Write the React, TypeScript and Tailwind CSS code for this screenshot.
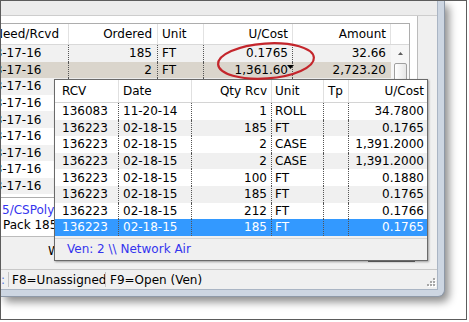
import React from 'react';

type MainRow = { d: string; ord?: string; unit?: string; cost?: string; amt?: string; sel?: boolean };

const mainRows: MainRow[] = [
  { d: '03-17-16', ord: '185', unit: 'FT', cost: '0.1765', amt: '32.66' },
  { d: '03-17-16', ord: '2', unit: 'FT', cost: '1,361.60', amt: '2,723.20', sel: true },
  { d: '03-17-16' },
  { d: '03-17-16' },
  { d: '03-17-16' },
  { d: '03-17-16' },
  { d: '03-17-16' },
  { d: '03-17-16' },
  { d: '03-17-16' },
];

type RcvRow = { rcv: string; date: string; qty: string; unit: string; tp: string; cost: string };

const rcvRows: RcvRow[] = [
  { rcv: '136083', date: '11-20-14', qty: '1', unit: 'ROLL', tp: '', cost: '34.7800' },
  { rcv: '136223', date: '02-18-15', qty: '185', unit: 'FT', tp: '', cost: '0.1765' },
  { rcv: '136223', date: '02-18-15', qty: '2', unit: 'CASE', tp: '', cost: '1,391.2000' },
  { rcv: '136223', date: '02-18-15', qty: '2', unit: 'CASE', tp: '', cost: '1,391.2000' },
  { rcv: '136223', date: '02-18-15', qty: '100', unit: 'FT', tp: '', cost: '0.1880' },
  { rcv: '136223', date: '02-18-15', qty: '185', unit: 'FT', tp: '', cost: '0.1765' },
  { rcv: '136223', date: '02-18-15', qty: '212', unit: 'FT', tp: '', cost: '0.1766' },
  { rcv: '136223', date: '02-18-15', qty: '185', unit: 'FT', tp: '', cost: '0.1765' },
];

function MainGrid() {
  return (
    <div className="w-[409px] h-[175px] border-t border-b border-r border-[#adadad] bg-white flex flex-col">
      {/* header */}
      <div className="h-[21px] flex border-b border-[#d9d9d9] bg-white">
        <div className="w-[68px] overflow-hidden border-r border-[#e2e2e2] flex items-center">
          <span className="ml-[-7px] whitespace-nowrap">Need/Rcvd</span>
        </div>
        <div className="w-[89px] border-r border-[#e2e2e2] flex items-center justify-end pr-[5px]">Ordered</div>
        <div className="w-[46px] border-r border-[#e2e2e2] flex items-center pl-[4px]">Unit</div>
        <div className="w-[89px] border-r border-[#e2e2e2] flex items-center justify-end pr-[4px]">U/Cost</div>
        <div className="w-[98px] border-r border-[#e2e2e2] flex items-center justify-end pr-[4px]">Amount</div>
        <div className="w-[18px]" />
      </div>
      <div className="flex flex-1 min-h-0">
        <div className="w-[390px] flex flex-col">
          {mainRows.map((r, i) => {
            const bg = r.sel ? 'bg-[#dad5cc]' : i % 2 === 0 ? 'bg-[#f1f1f1]' : 'bg-white';
            return (
              <div key={i} className={`h-[16.6px] flex ${bg}`}>
                <div className="w-[68px] overflow-hidden border-r border-dotted border-[#555] flex items-center">
                  <span className="ml-[-14px] whitespace-nowrap">{r.d}</span>
                </div>
                <div className="w-[89px] border-r border-dotted border-[#555] flex items-center justify-end pr-[5px]">{r.ord}</div>
                <div className="w-[46px] border-r border-dotted border-[#555] flex items-center pl-[4px]">{r.unit}</div>
                <div className="relative w-[89px] border-r border-dotted border-[#555] flex items-center justify-end pr-[4px]">
                  {r.cost}
                  {r.sel && (
                    <svg className="absolute right-[-2px] top-[3px]" width="7" height="4" viewBox="0 0 7 4">
                      <path d="M0 0 L7 0 L3.5 4 Z" fill="#000" />
                    </svg>
                  )}
                </div>
                <div className="w-[98px] flex items-center justify-end pr-[5px]">{r.amt}</div>
              </div>
            );
          })}
        </div>
        {/* vertical scrollbar */}
        <div className="w-[18px] bg-[#f6f6f6] flex flex-col items-center">
          <div className="h-[17px] w-full flex items-center justify-center">
            <svg width="5" height="3" viewBox="0 0 5 3">
              <path d="M0 3 L2.5 0 L5 3 Z" fill="#5c5c5c" />
            </svg>
          </div>
          <div className="mt-[1px] w-[13px] h-[70px] rounded-[2px] border border-[#9f9f9f] bg-gradient-to-r from-white to-[#e6e6e6]" />
        </div>
      </div>
    </div>
  );
}

function ReceiptPopup() {
  return (
    <div className="absolute left-[53px] top-[78px] w-[374px] h-[182px] border border-[#6a6a6a] bg-[#f0f0f0] shadow-[1px_1px_2px_rgba(0,0,0,0.35)] flex flex-col">
      <div className="h-[23px] flex bg-white border-b border-[#d4d4d4]">
        <div className="w-[64px] border-r border-[#e0e0e0] flex items-center pl-[7px]">RCV</div>
        <div className="w-[73px] border-r border-[#e0e0e0] flex items-center pl-[4px]">Date</div>
        <div className="w-[80px] border-r border-[#e0e0e0] flex items-center justify-end pr-[4px]">Qty Rcv</div>
        <div className="w-[52px] border-r border-[#e0e0e0] flex items-center pl-[3px]">Unit</div>
        <div className="w-[25px] border-r border-[#e0e0e0] flex items-center pl-[4px]">Tp</div>
        <div className="w-[78px] flex items-center justify-end pr-[3px]">U/Cost</div>
      </div>
      {rcvRows.map((r, i) => {
        const sel = i === rcvRows.length - 1;
        const bg = sel ? 'bg-[#3399ff] text-white' : i % 2 === 1 ? 'bg-[#f0f0f0]' : 'bg-white';
        return (
          <div key={i} className={`h-[16.6px] flex ${bg}`}>
            <div className="w-[64px] border-r border-dotted border-[#555] flex items-center pl-[7px]">{r.rcv}</div>
            <div className="w-[73px] border-r border-dotted border-[#555] flex items-center pl-[4px]">{r.date}</div>
            <div className="w-[80px] border-r border-dotted border-[#555] flex items-center justify-end pr-[4px]">{r.qty}</div>
            <div className="w-[52px] border-r border-dotted border-[#555] flex items-center pl-[3px]">{r.unit}</div>
            <div className="w-[25px] border-r border-dotted border-[#555] flex items-center pl-[4px]">{r.tp}</div>
            <div className="w-[78px] flex items-center justify-end pr-[3px]">{r.cost}</div>
          </div>
        );
      })}
      <div className="mt-[2px] border-t border-[#d6d6d6] flex-1 flex items-center pl-[12px] text-[#3434ee]">
        Ven: 2 \\ Network Air
      </div>
    </div>
  );
}

function SizeGrip() {
  const dots = [
    [6, 0],
    [3, 3], [6, 3],
    [0, 6], [3, 6], [6, 6],
  ];
  return (
    <svg width="9" height="9" viewBox="0 0 9 9">
      {dots.map(([x, y], i) => (
        <g key={i}>
          <rect x={x + 1} y={y + 1} width="2" height="2" fill="#ffffff" />
          <rect x={x} y={y} width="2" height="2" fill="#a7a7a7" />
        </g>
      ))}
    </svg>
  );
}

function Window() {
  return (
    <div className="relative w-[444px] h-[296px] bg-[#cdd6e2] border-r border-b border-[#8e99a8] rounded-br-[7px] pr-[6px] pb-[6px] shadow-[4px_5px_8px_rgba(0,0,0,0.45)]">
      <div className="w-full h-full bg-[#f0f0f0] flex flex-col border-r border-b border-[#aab5c4]">
        {/* toolbar band */}
        <div className="h-[15px] bg-[#ececec] border-b border-[#cdcdcd]" />

        {/* panel */}
        <div className="h-[222px] flex">
          <div className="w-[417px] h-full bg-white border-r border-b border-[#bcbcbc] pt-[7px] flex flex-col">
            <MainGrid />
            <div className="pt-[5px] flex flex-col w-[53px] overflow-hidden">
              <div className="h-[15px] flex items-center pl-[1px] text-[#3434ee] whitespace-nowrap">5/CSPoly</div>
              <div className="h-[15px] flex items-center pl-[2px] whitespace-nowrap">Pack 185</div>
            </div>
          </div>
        </div>

        {/* lower gray area */}
        <div className="h-[32px] flex flex-col">
          <div className="mt-[6px] w-[53px] h-[15px] overflow-hidden flex items-center pl-[47px] whitespace-nowrap">W</div>
          <div className="mt-[2px] ml-[367px] w-[47px] h-[2px] bg-[#707070]" />
        </div>

        {/* status bar */}
        <div className="h-[20px] flex items-center border-t border-[#c8c8c8] bg-[#f0f0f0]">
          <div className="w-[7px] overflow-hidden text-[#5a7fe0] flex items-center">:</div>
          <div className="w-[1px] h-[15px] bg-[#c4c4c4]" />
          <div className="w-[96px] pl-[3px] whitespace-nowrap">F8=Unassigned</div>
          <div className="w-[1px] h-[15px] bg-[#c4c4c4]" />
          <div className="pl-[4px] whitespace-nowrap">F9=Open (Ven)</div>
          <div className="ml-auto mr-[1px] mt-[6px]">
            <SizeGrip />
          </div>
        </div>
      </div>

      <ReceiptPopup />

      {/* red callout ellipse */}
      <svg className="absolute left-[210px] top-[35px]" width="112" height="52" viewBox="0 0 112 52">
        <ellipse cx="55" cy="25" rx="48" ry="17.5" fill="none" stroke="#c4262c" strokeWidth="2.2" transform="rotate(-4 55 25)" />
      </svg>
    </div>
  );
}

export default function App() {
  return (
    <div className="w-[469px] h-[322px] bg-white">
      <div className="w-[467px] h-[320px] border border-[#5c5c5c] bg-white overflow-hidden font-['DejaVu_Sans',Verdana,sans-serif] text-[12px] leading-none text-black">
        <Window />
      </div>
    </div>
  );
}
